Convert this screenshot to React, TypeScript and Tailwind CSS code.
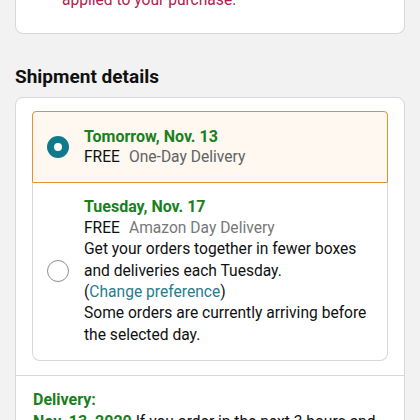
import React from "react";

export default function App() {
  return (
    <div
      className="w-[420px] h-[420px] overflow-hidden bg-[#f2f2f2] text-[15.6px] leading-[21.4px] text-[#0f1111]"
      style={{ fontFamily: 'Roboto, "Noto Sans", Arial, sans-serif' }}
    >
      <div className="mx-[15px] -mt-[10px] rounded-b-lg border border-t-0 border-[#d5d9d9] bg-white pb-[22px] pl-[46px]">
        <div className="text-[#b3204d]">applied to your purchase.</div>
      </div>

      <h2 className="mx-[15px] mt-[32px] text-[19px] font-bold leading-[22px] text-[#0f1111]">
        Shipment details
      </h2>

      <div className="mx-[15px] mt-[9px] rounded-lg border border-[#d5d9d9] bg-white">
        <div className="px-[16px] pt-[13px] pb-[14px]">
          <div className="flex items-center rounded-t-[4px] border border-[#e3922f] bg-[#fef8f0] pl-[14px] pr-[12px] h-[72px]">
            <span className="h-[22px] w-[22px] shrink-0 rounded-full border-[7px] border-[#0f7a8b] bg-white" />
            <div className="ml-[15px]">
              <div className="font-bold text-[16px] text-[#1a7f1e]">Tomorrow, Nov. 13</div>
              <div>
                <span>FREE</span>
                <span className="ml-[9px] text-[#5f6363]">One-Day Delivery</span>
              </div>
            </div>
          </div>
          <div className="flex items-center rounded-b-lg border border-t-0 border-[#d5d9d9] pl-[14px] pr-[12px] pt-[13px] pb-[14px]">
            <span className="h-[22px] w-[22px] shrink-0 rounded-full border-[1.5px] border-[#8d9096] bg-white" />
            <div className="ml-[15px]">
              <div className="font-bold text-[16px] text-[#1a7f1e]">Tuesday, Nov. 17</div>
              <div>
                <span>FREE</span>
                <span className="ml-[9px] text-[#767979]">Amazon Day Delivery</span>
              </div>
              <div>Get your orders together in fewer boxes and deliveries each Tuesday.</div>
              <div>
                (<span className="text-[#1f7d8c]">Change preference</span>)
              </div>
              <div>Some orders are currently arriving before the selected day.</div>
            </div>
          </div>
        </div>
        <div className="border-t border-[#d5d9d9] px-[17px] pt-[13px] pb-[20px]">
          <div className="font-bold text-[16px] text-[#1a7f1e]">Delivery:</div>
          <div>
            <span className="font-bold text-[16px] text-[#1a7f1e]">Nov. 13, 2020</span> If you order in the next 3 hours and 20 minutes
          </div>
        </div>
      </div>
    </div>
  );
}
